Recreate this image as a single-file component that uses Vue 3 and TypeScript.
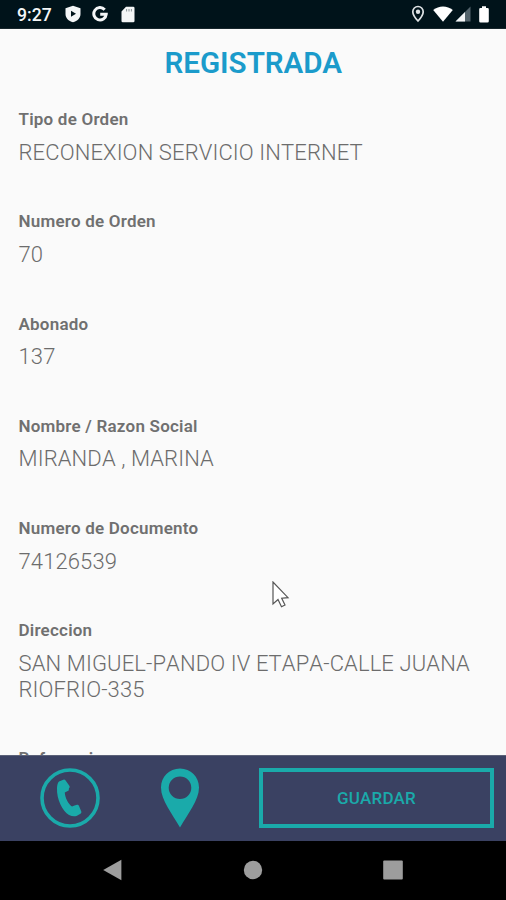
<script setup lang="ts">
interface Field {
  label: string
  lines: string[]
}

const fields: Field[] = [
  { label: 'Tipo de Orden', lines: ['RECONEXION SERVICIO INTERNET'] },
  { label: 'Numero de Orden', lines: ['70'] },
  { label: 'Abonado', lines: ['137'] },
  { label: 'Nombre / Razon Social', lines: ['MIRANDA , MARINA'] },
  { label: 'Numero de Documento', lines: ['74126539'] },
  { label: 'Direccion', lines: ['SAN MIGUEL-PANDO IV ETAPA-CALLE JUANA', 'RIOFRIO-335'] },
  { label: 'Referencia', lines: [] },
]
</script>

<template>
  <div class="screen">
    <header class="status">
      <span class="clock">9:27</span>
      <svg class="shield" width="16" height="18" viewBox="0 0 16 18">
        <path fill="#f4f6f7" fill-rule="evenodd" d="M8 .8 15.500 3.300V9c0 4-3 7-7.500 8.300C3.500 16 .5 13 .5 9V3.300ZM6 5.800v6L11 8.800Z" />
      </svg>
      <svg class="google" width="16" height="16" viewBox="0 0 16 16">
        <path fill="none" stroke="#f4f6f7" stroke-width="3" d="M12.700 3.700A6.200 6.200 0 1 0 14.200 8.300H8.200" />
      </svg>
      <svg class="sd" width="14" height="17" viewBox="0 0 14 17">
        <path fill="#f4f6f7" d="M5 .8h7.200q1.300 0 1.300 1.300v12.800q0 1.300-1.300 1.300H1.800Q.5 16.200.5 14.900V5.500Z" />
        <path stroke="#8b9498" stroke-width="1" d="M5.600 3v2.500M8 3v2.500M10.400 3v2.500" />
      </svg>
      <span class="spacer"></span>
      <svg class="place" width="14" height="18" viewBox="0 0 14 18">
        <path fill="none" stroke="#dfe3e5" stroke-width="1.700" d="M7 1.500a5.200 5.200 0 0 0-5.200 5.200C1.800 10.400 7 16 7 16s5.200-5.600 5.200-9.300A5.200 5.200 0 0 0 7 1.500Z" />
        <circle cx="7" cy="6.800" r="2.200" fill="#dfe3e5" />
      </svg>
      <svg class="wifi" width="20" height="16" viewBox="0 0 20 16">
        <path fill="#fff" d="M.2 4Q4.500.5 10 .5T19.800 4L10 15.700Z" />
      </svg>
      <svg class="signal" width="16" height="16" viewBox="0 0 16 16">
        <path fill="#53636b" d="M15.500.5v15H.5Z" />
        <path fill="#f4f6f7" d="M10 6v9.500H.5Z" />
      </svg>
      <svg class="battery" width="10" height="17" viewBox="0 0 10 17">
        <path fill="#fff" d="M3 .3h4v1.700h1.500q1.300 0 1.300 1.300v11.900q0 1.300-1.300 1.300h-7Q.2 16.500.2 15.200V3.300Q.2 2 1.500 2H3Z" />
      </svg>
    </header>

    <main class="content">
      <h1 class="title">REGISTRADA</h1>
      <section v-for="field in fields" :key="field.label" class="field">
        <div class="label">{{ field.label }}</div>
        <div class="value">
          <div v-for="line in field.lines" :key="line">{{ line }}</div>
        </div>
      </section>
    </main>

    <footer class="actions">
      <svg class="phone" width="60" height="60" viewBox="0 0 60 60">
        <circle cx="30" cy="30" r="28" fill="none" stroke="#1aaaaa" stroke-width="3.600" />
        <path fill="#1aaaaa" d="M19 13.500 23.300 11.700Q24.800 11.300 25.600 12.500L29.500 18Q30.200 19.200 29 20.200L28.700 22.500 24.800 24.500C24.800 29 28.500 36.500 32 38.500L34.500 37.500 37 36.800Q38.200 36.300 38.900 37.800L41.300 43.500Q41.700 45 40.500 45.800L36.500 48Q33 49 29 47C22.500 43 16.500 31.500 17 20Q17.200 15 19 13.500Z" />
      </svg>
      <svg class="pin" width="40" height="60" viewBox="0 0 40 60">
        <path fill="#1aaaaa" fill-rule="evenodd" d="M20 .5C9.200.5 1 8.800 1 19.500C1 32.500 12.500 46 20 59.500C27.500 46 39 32.500 39 19.500C39 8.800 30.800.5 20 .5ZM20 8.500a11.300 11.300 0 1 1 0 22.600a11.300 11.300 0 0 1 0-22.600Z" />
      </svg>
      <button class="save" type="button">GUARDAR</button>
    </footer>

    <nav class="navbar">
      <svg width="20" height="22" viewBox="0 0 20 22"><path fill="#9d9d9d" d="M.2 11 18.400.8v20.400Z" /></svg>
      <svg width="20" height="20" viewBox="0 0 20 20"><circle cx="10" cy="10" r="9.200" fill="#9d9d9d" /></svg>
      <svg width="20" height="20" viewBox="0 0 20 20"><rect x=".2" y=".4" width="19.600" height="19.200" rx="1" fill="#9d9d9d" /></svg>
    </nav>

    <svg class="pointer" width="18" height="28" viewBox="0 0 18 28">
      <path fill="#fff" stroke="#555" stroke-width="1.200" d="M1 1v22l5-4.500 3.500 7.300 3.500-1.800-3.300-6.800 6.300-.5Z" />
    </svg>
  </div>
</template>

<style>
body {
  margin: 0;
  background: #000;
}
</style>

<style scoped>
.screen {
  position: relative;
  display: flex;
  flex-direction: column;
  width: 506px;
  height: 900px;
  overflow: hidden;
  background: #fafafa;
  font-family: Roboto, "Liberation Sans", sans-serif;
}
.screen svg {
  display: block;
  flex: none;
}
.status {
  display: flex;
  align-items: center;
  box-sizing: border-box;
  height: 29px;
  flex: none;
  padding: 0 17px;
  background: #00131a;
  border-bottom: 1px solid #17262c;
}
.clock {
  width: 48px;
  color: #f4f6f7;
  font-size: 17.600px;
  font-weight: 500;
  line-height: 28px;
  padding-top: 2px;
}
.google {
  margin-left: 11px;
}
.sd {
  margin-left: 13px;
}
.spacer {
  flex: 1;
}
.wifi {
  margin-left: 8px;
}
.signal {
  margin-left: 2px;
}
.battery {
  margin-left: 8px;
}
.content {
  flex: 1;
  min-height: 0;
  overflow: hidden;
  padding: 0 18px 0 18.500px;
}
.title {
  margin: 16px 0 28.300px;
  color: #1b9bcb;
  font-size: 29.600px;
  font-weight: 600;
  line-height: 36px;
  text-align: center;
}
.field {
  min-height: 102.200px;
}
.label {
  color: #707070;
  font-size: 17px;
  font-weight: 600;
  letter-spacing: .22px;
  line-height: 20px;
}
.value {
  margin-top: 10.600px;
  color: #6c6c6c;
  font-size: 22px;
  font-weight: 300;
  font-kerning: none;
  letter-spacing: .12px;
  line-height: 25.800px;
  white-space: nowrap;
}
.field:nth-last-child(2) {
  min-height: 128px;
}
.actions {
  display: flex;
  align-items: center;
  box-sizing: border-box;
  flex: none;
  height: 86px;
  padding: 0 12px 2px 39.500px;
  background: #3a4162;
  border-top: 1px solid #5b6178;
}
.pin {
  margin-left: 60.800px;
}
.save {
  box-sizing: border-box;
  width: 235px;
  height: 60px;
  margin: 0 0 0 auto;
  padding: 0;
  border: 4px solid #1aaaaa;
  background: transparent;
  color: #1aaaaa;
  font-family: inherit;
  font-size: 17px;
  font-weight: 500;
  letter-spacing: .2px;
}
.navbar {
  display: grid;
  grid-template-columns: repeat(3, 140px);
  justify-content: center;
  justify-items: center;
  align-items: center;
  box-sizing: border-box;
  flex: none;
  height: 59px;
  padding-bottom: 1px;
  background: #000;
}
.pointer {
  position: absolute;
  left: 272px;
  top: 581px;
}
</style>
